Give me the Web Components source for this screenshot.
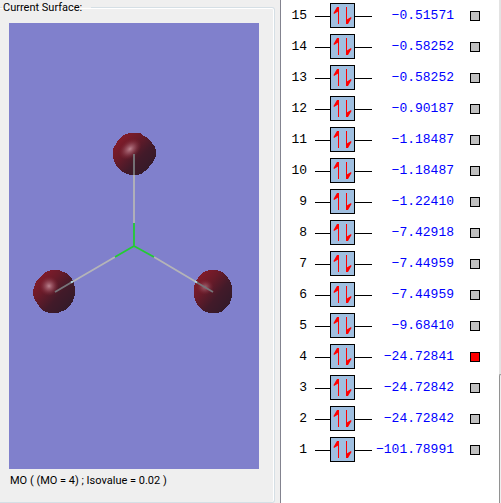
<!DOCTYPE html>
<html lang="en">
<head>
<meta charset="utf-8">
<title>Molecular Orbitals</title>
<style>
body{margin:0;background:#fff;font-family:Roboto,"Liberation Sans",Arial,sans-serif}
</style>
</head>
<body>
<mo-editor></mo-editor>
<script>
const define = (name, html, setup) => customElements.define(name, class extends HTMLElement {
  connectedCallback() {
    if (this.shadowRoot) return;
    const root = this.attachShadow({mode: 'open'});
    const t = document.createElement('template');
    t.innerHTML = html;
    root.append(t.content.cloneNode(true));
    if (setup) setup(this, root);
  }
});

define('molecule-view', `
<style>
:host{display:block;background:#8080cc}
svg{display:block;width:100%;height:auto}
</style>
<svg viewBox="9 23 250 446" role="img" aria-label="Orbital surface">
  <defs>
    <linearGradient id="body" x1=".1" y1=".1" x2=".85" y2=".8">
      <stop offset="0" stop-color="#861b2a"/><stop offset=".35" stop-color="#6a1b29"/>
      <stop offset=".7" stop-color="#421a29"/><stop offset="1" stop-color="#361a29"/>
    </linearGradient>
    <radialGradient id="shine">
      <stop offset="0" stop-color="#bc8490"/><stop offset=".45" stop-color="#98505f" stop-opacity=".7"/>
      <stop offset="1" stop-color="#7a202f" stop-opacity="0"/>
    </radialGradient>
  </defs>
  <g fill="none" stroke-width="1.8">
    <path stroke="#b4b4b8" d="M134 154V223M55 292L115 257M213 292L154 257"/>
    <path stroke="#22cc33" d="M134 223V246L115 257M134 246L154 257"/>
  </g>
  <g fill="url(#body)" shape-rendering="crispEdges">
    <path d="M129 133H140L144 136L148 138L152 143L155 147L156 151V156L153 162L149 167L145 171L141 174L137 175H131L127 174L121 171L117 167L114 161L113 157V149L116 144L119 139L124 135Z"/>
    <path d="M51 270H58L61 271L66 273L71 277L74 283L75 289V295L73 301L70 306L65 310L58 313H49L43 311L39 306L35 300L33 294V290L36 282L40 277L45 272Z"/>
    <path d="M209 270H217L222 272L227 276L230 281L232 286V297L230 303L226 308L221 312L216 313H209L203 311L199 307L196 302L194 296V287L196 281L200 275L204 272Z"/>
  </g>
  <g fill="url(#shine)">
    <ellipse cx="130" cy="149" rx="13" ry="9" transform="rotate(-40 130 149)"/>
    <ellipse cx="49" cy="286" rx="10" ry="10"/>
    <ellipse cx="205" cy="287" rx="9" ry="8" opacity=".7"/>
  </g>
  <g fill="none" stroke="#777479" stroke-width="1.9">
    <path d="M134 154V175M55 292L72 282M213 292L196 282"/>
  </g>
  <path stroke="#b3dcea" stroke-width="2" d="M71 282.500L73 281.300M197 282.500L195 281.300"/>
</svg>`);

define('surface-panel', `
<style>
:host{display:block;background:#efefef;border-right:1px solid #83838f;font-size:11px;line-height:14px}
fieldset{margin:0 5px 0 0;padding:8px 15px 14px 9px;min-width:0;border:1px solid #d5dfe5;border-left:0;
 border-radius:0 3px 3px 0;box-shadow:inset -1px 0 #fff,inset 0 1px #fff}
legend{margin-left:-7px;padding:0 9px 0 1px;line-height:15px}
p{margin:5px 0 0 1px}
</style>
<fieldset><legend><slot name="title"></slot></legend>
<slot></slot><p><slot name="caption"></slot></p></fieldset>`);

define('orbital-row', `
<style>
:host{display:block}
label{display:grid;grid-template-columns:27px 57px 82px 26px;height:30px;padding-top:1px;align-items:center;
 font:13px/16px "Liberation Mono","Courier New",monospace}
.n{text-align:right;margin-right:8px}
.e{text-align:right;color:#00f}
svg{display:block}
input{appearance:none;box-sizing:border-box;justify-self:end;width:10px;height:10px;margin:0;
 border:1px solid #000;background:#c0c0c0}
input:checked{background:#f00}
</style>
<label><span class="n"></span>
<svg width="57" height="26" viewBox="0 0 57 26" aria-hidden="true">
  <path d="M0 13.500H57" stroke="#000"/>
  <rect x="15.500" y=".500" width="24" height="24" fill="#a0bfe0" stroke="#000"/>
  <path d="M23.500 4V21M31.500 4V21" stroke="#f00"/>
  <path d="M24 4L22 4L18.500 10L19 11L24 8ZM31 21H33L36.500 15L36 14L31 17Z" fill="#f00"/>
</svg>
<span class="e"></span><input type="checkbox"></label>`, (el, root) => {
  root.querySelector('.n').textContent = el.getAttribute('number');
  root.querySelector('.e').textContent = el.getAttribute('energy').replace('-', '\u2212');
  root.querySelector('input').checked = el.hasAttribute('selected');
});

define('orbital-list', `
<style>
:host{display:grid;grid-template-columns:1fr 2px;background:#fff}
.rows{padding-left:7px}
.bar{display:grid;grid-template-rows:374fr 129fr;background:#e3e3e3}
.thumb{grid-row:2;border-left:1px solid #929292;border-top:1px solid #929292;border-radius:2px 0 0 0;background:#efefef}
</style>
<div class="rows"></div><div class="bar"><div class="thumb"></div></div>`, (el, root) => {
  const energies = ['-0.51571','-0.58252','-0.58252','-0.90187','-1.18487','-1.18487','-1.22410','-7.42918',
    '-7.44959','-7.44959','-9.68410','-24.72841','-24.72842','-24.72842','-101.78991'];
  energies.forEach((energy, i) => {
    const row = document.createElement('orbital-row');
    row.setAttribute('number', 15 - i);
    row.setAttribute('energy', energy);
    if (15 - i === 4) row.setAttribute('selected', '');
    root.querySelector('.rows').append(row);
  });
});

define('mo-editor', `
<style>:host{display:grid;grid-template-columns:281fr 220fr;min-height:100vh}</style>
<surface-panel>
  <span slot="title">Current Surface:</span>
  <molecule-view></molecule-view>
  <span slot="caption">MO ( (MO = 4) ; Isovalue = 0.02 )</span>
</surface-panel>
<orbital-list></orbital-list>`);
</script>
</body>
</html>
